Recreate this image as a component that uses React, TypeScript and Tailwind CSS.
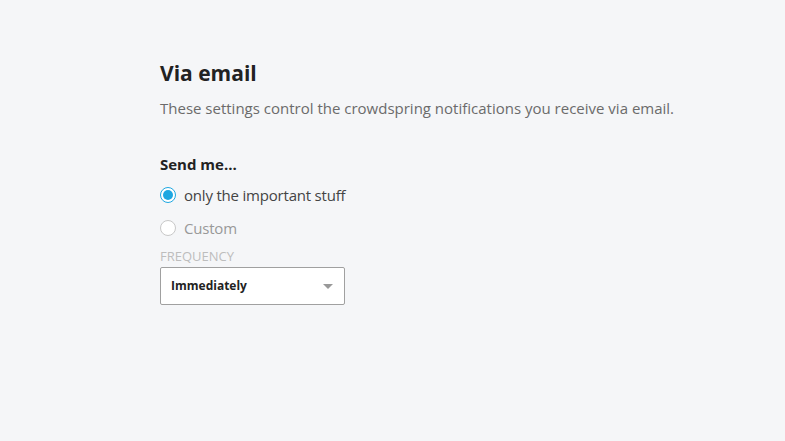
import React from 'react';

const font = { fontFamily: '"Open Sans", Lato, sans-serif' };

const Radio = ({ checked, label }: { checked: boolean; label: string }) => (
  <label className="flex items-center gap-2 h-[20px]">
    <span
      className={`flex items-center justify-center w-[16px] h-[16px] rounded-full border bg-white ${
        checked ? 'border-[#1ea7e1]' : 'border-[#c8c8c8]'
      }`}
    >
      {checked && <span className="w-[10px] h-[10px] rounded-full bg-[#1ea7e1]" />}
    </span>
    <span className={`text-[15px] tracking-[-0.2px] ${checked ? 'text-[#444]' : 'text-[#999]'}`}>{label}</span>
  </label>
);

export default function App() {
  return (
    <div className="min-h-screen w-full bg-[#f5f6f8]" style={font}>
      <div className="pl-[160px] pt-[58px]">
        <h2 className="text-[21px] font-bold text-[#222] leading-[30px]">Via email</h2>
        <p className="mt-[10px] text-[15px] text-[#6b6b6b] leading-[20px]">
          These settings control the crowdspring notifications you receive via email.
        </p>
        <h3 className="mt-[36px] text-[15px] font-bold text-[#222] leading-[20px]">Send me...</h3>
        <div className="mt-[11px] flex flex-col gap-[13px]">
          <Radio checked label="only the important stuff" />
          <Radio checked={false} label="Custom" />
        </div>
        <div className="mt-[10px] text-[13px] uppercase text-[#bdbdbd] leading-[16px]">Frequency</div>
        <div className="mt-[3px] w-[185px] h-[38px] bg-white border border-[#a0a0a0] rounded-[2px] flex items-center justify-between pl-[10px] pr-[11px]">
          <span className="text-[12px] font-bold text-[#222]">Immediately</span>
          <svg width="10" height="5" viewBox="0 0 10 5">
            <path d="M0 0h10L5 5z" fill="#999" />
          </svg>
        </div>
      </div>
    </div>
  );
}
